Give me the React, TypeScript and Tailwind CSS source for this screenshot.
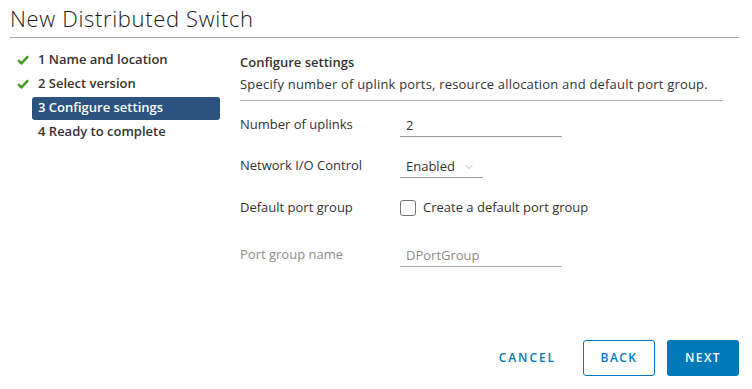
import { ChevronDown } from 'lucide-react';

const steps = [
  { n: 1, label: 'Name and location', done: true },
  { n: 2, label: 'Select version', done: true },
  { n: 3, label: 'Configure settings', active: true },
  { n: 4, label: 'Ready to complete' },
];

function CheckMark() {
  return (
    <svg width="12" height="10" viewBox="0 0 12 10" className="text-[#3c9c17]">
      <path d="M1 5.2 L4.4 8.4 L11 1.4" fill="none" stroke="currentColor" strokeWidth="2.4" strokeLinejoin="miter" />
    </svg>
  );
}

export default function App() {
  return (
    <div
      className="w-[752px] h-[389px] bg-white text-[#333] flex flex-col px-[10px]"
      style={{ fontFamily: '"Open Sans", "Noto Sans", sans-serif' }}
    >
      {/* Header */}
      <div className="h-[38px] border-b border-[#a8a8a8] mr-[3px] flex items-start">
        <h1 className="text-[22px] font-light leading-[36px] tracking-[0.03em] text-[#1a1a1a]">
          New Distributed Switch
        </h1>
      </div>

      <div className="flex flex-1">
        {/* Steps */}
        <ul className="w-[230px] pt-[10px]">
          {steps.map((s) => (
            <li key={s.n} className="flex items-center h-[24px]">
              <span className="w-[22px] flex justify-center pl-[4px]">
                {s.done && <CheckMark />}
              </span>
              <div
                className={`w-[188px] h-[23px] rounded-[3px] px-[6px] flex items-center text-[13px] font-semibold ${
                  s.active ? 'bg-[#2c5380] text-white' : 'text-[#333]'
                }`}
              >
                {s.n} {s.label}
              </div>
            </li>
          ))}
        </ul>

        {/* Content */}
        <div className="flex-1 pr-[19px] pt-[15px] flex flex-col">
          <div className="text-[13px] font-semibold leading-[18px] text-[#333]">Configure settings</div>
          <div className="text-[13px] leading-[18px] tracking-[0.015em] mt-[4px] pb-[7px] border-b border-[#a8a8a8] text-[#333]">
            Specify number of uplink ports, resource allocation and default port group.
          </div>

          <div className="flex flex-col text-[13px] mt-[12px]">
            <div className="flex items-center h-[24px]">
              <span className="w-[160px]">Number of uplinks</span>
              <div className="w-[162px] h-[24px] border-b border-[#9a9a9a] flex items-center px-[6px] pt-[2px]">2</div>
            </div>

            <div className="flex items-center h-[24px] mt-[17px]">
              <span className="w-[160px]">Network I/O Control</span>
              <div className="w-[83px] h-[24px] border-b border-[#9a9a9a] flex items-center px-[6px] pt-[2px] gap-[8px]">
                Enabled
                <ChevronDown size={12} strokeWidth={1.2} className="text-[#8a8a8a]" />
              </div>
            </div>

            <div className="flex items-center h-[24px] mt-[18px]">
              <span className="w-[160px]">Default port group</span>
              <span className="w-[16px] h-[16px] border border-[#737373] rounded-[3px] bg-white" />
              <span className="ml-[7px]">Create a default port group</span>
            </div>

            <div className="flex items-center h-[24px] mt-[23px] text-[#8c8c8c]">
              <span className="w-[160px]">Port group name</span>
              <div className="w-[162px] h-[24px] border-b border-[#b0b0b0] flex items-center px-[6px] pt-[2px]">
                DPortGroup
              </div>
            </div>
          </div>
        </div>
      </div>

      {/* Footer */}
      <div className="flex justify-end items-center gap-[12px] pr-[3px] pb-[13px]">
        <button className="h-[36px] px-[12px] text-[12px] font-semibold tracking-[0.16em] text-[#0079b8] mr-[3px]">
          CANCEL
        </button>
        <button className="h-[36px] w-[72px] rounded-[3px] border border-[#0079b8] text-[12px] font-semibold tracking-[0.12em] text-[#0079b8]">
          BACK
        </button>
        <button className="h-[36px] w-[72px] rounded-[3px] bg-[#0079b8] text-[12px] font-semibold tracking-[0.12em] text-white">
          NEXT
        </button>
      </div>
    </div>
  );
}
